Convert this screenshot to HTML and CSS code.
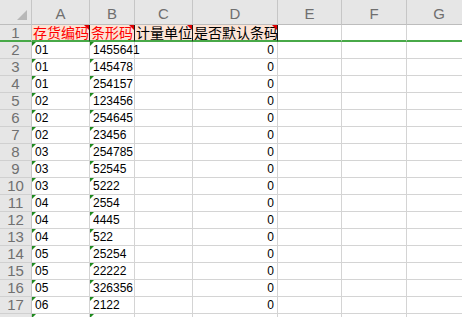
FILE: index.html
```html
<!DOCTYPE html>
<html>
<head>
<meta charset="utf-8">
<link rel="stylesheet" href="styles.css">
</head>
<body>
<div class="sheet">
  <div class="corner"><svg class="corner-tri" width="10" height="10" viewBox="0 0 10 10"><polygon points="10,0 10,10 0,10" fill="#b8b8b8"/></svg></div>
  <div class="colh">A</div><div class="colh">B</div><div class="colh">C</div><div class="colh">D</div><div class="colh">E</div><div class="colh">F</div><div class="colh">G</div>

  <div class="rowh frz">1</div>
  <div class="cell frz hd red">存货编码<span class="cmt"></span></div>
  <div class="cell frz hd red">条形码<span class="cmt"></span></div>
  <div class="cell frz hd">计量单位<span class="cmt"></span></div>
  <div class="cell frz hd">是否默认条码<span class="cmt"></span></div>
  <div class="cell frz"></div><div class="cell frz"></div><div class="cell frz"></div>

  <div class="rowh">2</div><div class="cell txt">01</div><div class="cell txt">1455641</div><div class="cell"></div><div class="cell num">0</div><div class="cell"></div><div class="cell"></div><div class="cell"></div>
  <div class="rowh">3</div><div class="cell txt">01</div><div class="cell txt">145478</div><div class="cell"></div><div class="cell num">0</div><div class="cell"></div><div class="cell"></div><div class="cell"></div>
  <div class="rowh">4</div><div class="cell txt">01</div><div class="cell txt">254157</div><div class="cell"></div><div class="cell num">0</div><div class="cell"></div><div class="cell"></div><div class="cell"></div>
  <div class="rowh">5</div><div class="cell txt">02</div><div class="cell txt">123456</div><div class="cell"></div><div class="cell num">0</div><div class="cell"></div><div class="cell"></div><div class="cell"></div>
  <div class="rowh">6</div><div class="cell txt">02</div><div class="cell txt">254645</div><div class="cell"></div><div class="cell num">0</div><div class="cell"></div><div class="cell"></div><div class="cell"></div>
  <div class="rowh">7</div><div class="cell txt">02</div><div class="cell txt">23456</div><div class="cell"></div><div class="cell num">0</div><div class="cell"></div><div class="cell"></div><div class="cell"></div>
  <div class="rowh">8</div><div class="cell txt">03</div><div class="cell txt">254785</div><div class="cell"></div><div class="cell num">0</div><div class="cell"></div><div class="cell"></div><div class="cell"></div>
  <div class="rowh">9</div><div class="cell txt">03</div><div class="cell txt">52545</div><div class="cell"></div><div class="cell num">0</div><div class="cell"></div><div class="cell"></div><div class="cell"></div>
  <div class="rowh">10</div><div class="cell txt">03</div><div class="cell txt">5222</div><div class="cell"></div><div class="cell num">0</div><div class="cell"></div><div class="cell"></div><div class="cell"></div>
  <div class="rowh">11</div><div class="cell txt">04</div><div class="cell txt">2554</div><div class="cell"></div><div class="cell num">0</div><div class="cell"></div><div class="cell"></div><div class="cell"></div>
  <div class="rowh">12</div><div class="cell txt">04</div><div class="cell txt">4445</div><div class="cell"></div><div class="cell num">0</div><div class="cell"></div><div class="cell"></div><div class="cell"></div>
  <div class="rowh">13</div><div class="cell txt">04</div><div class="cell txt">522</div><div class="cell"></div><div class="cell num">0</div><div class="cell"></div><div class="cell"></div><div class="cell"></div>
  <div class="rowh">14</div><div class="cell txt">05</div><div class="cell txt">25254</div><div class="cell"></div><div class="cell num">0</div><div class="cell"></div><div class="cell"></div><div class="cell"></div>
  <div class="rowh">15</div><div class="cell txt">05</div><div class="cell txt">22222</div><div class="cell"></div><div class="cell num">0</div><div class="cell"></div><div class="cell"></div><div class="cell"></div>
  <div class="rowh">16</div><div class="cell txt">05</div><div class="cell txt">326356</div><div class="cell"></div><div class="cell num">0</div><div class="cell"></div><div class="cell"></div><div class="cell"></div>
  <div class="rowh">17</div><div class="cell txt">06</div><div class="cell txt">2122</div><div class="cell"></div><div class="cell num">0</div><div class="cell"></div><div class="cell"></div><div class="cell"></div>
  <div class="rowh"></div><div class="cell txt"></div><div class="cell txt"></div><div class="cell"></div><div class="cell"></div><div class="cell"></div><div class="cell"></div><div class="cell"></div>
</div>
</body>
</html>
```

FILE: styles.css
```css
html, body {
  margin: 0;
  padding: 0;
  background: #ffffff;
  overflow: hidden;
}
.sheet {
  display: grid;
  grid-template-columns: 32px 58px 45px 58px 85px 64px 65px 65px;
  grid-template-rows: 25px repeat(18, 17px);
  width: 472px;
  font-family: "Liberation Sans", Arial, sans-serif;
}
.corner {
  background: #e6e6e6;
  border-right: 1px solid #c6c6c6;
  border-bottom: 1px solid #bdbdbd;
  box-sizing: border-box;
  display: flex;
  justify-content: flex-end;
  align-items: flex-end;
  padding: 0 4px 4px 0;
}
.corner-tri {
  display: block;
}
.colh {
  background: #e6e6e6;
  border-right: 1px solid #c6c6c6;
  border-bottom: 1px solid #bdbdbd;
  box-sizing: border-box;
  color: #6f6f6f;
  font-size: 15px;
  display: flex;
  align-items: center;
  justify-content: center;
  padding-top: 2px;
}
.rowh {
  background: #e6e6e6;
  border-right: 1px solid #c6c6c6;
  border-bottom: 1px solid #d0d0d0;
  box-sizing: border-box;
  color: #707070;
  font-size: 15px;
  display: flex;
  align-items: center;
  justify-content: center;
  line-height: 16px;
}
.cell {
  position: relative;
  border-right: 1px solid #d4d4d4;
  border-bottom: 1px solid #d4d4d4;
  box-sizing: border-box;
  font-size: 12px;
  color: #000;
  display: flex;
  align-items: flex-end;
  line-height: 14px;
  padding: 0 3px 1px 3px;
  white-space: nowrap;
  overflow: visible;
}
.frz {
  border-bottom: 2px solid #48a948;
}
.hd {
  background: #fce4d6;
  border-right: 1px solid #1a1a1a;
  font-family: "Noto Sans CJK SC", sans-serif;
  font-size: 14px;
  line-height: 15px;
  padding: 0 0 0 1px;
  align-items: center;
}
.red {
  color: #ff0000;
}
.cmt {
  position: absolute;
  top: 0;
  right: 0;
  width: 0;
  height: 0;
  border-top: 5px solid #e00000;
  border-left: 5px solid transparent;
}
.txt::before {
  content: "";
  position: absolute;
  top: 0;
  left: 0;
  width: 0;
  height: 0;
  border-top: 4px solid #1e8a1e;
  border-right: 4px solid transparent;
}
.num {
  justify-content: flex-end;
}
```
